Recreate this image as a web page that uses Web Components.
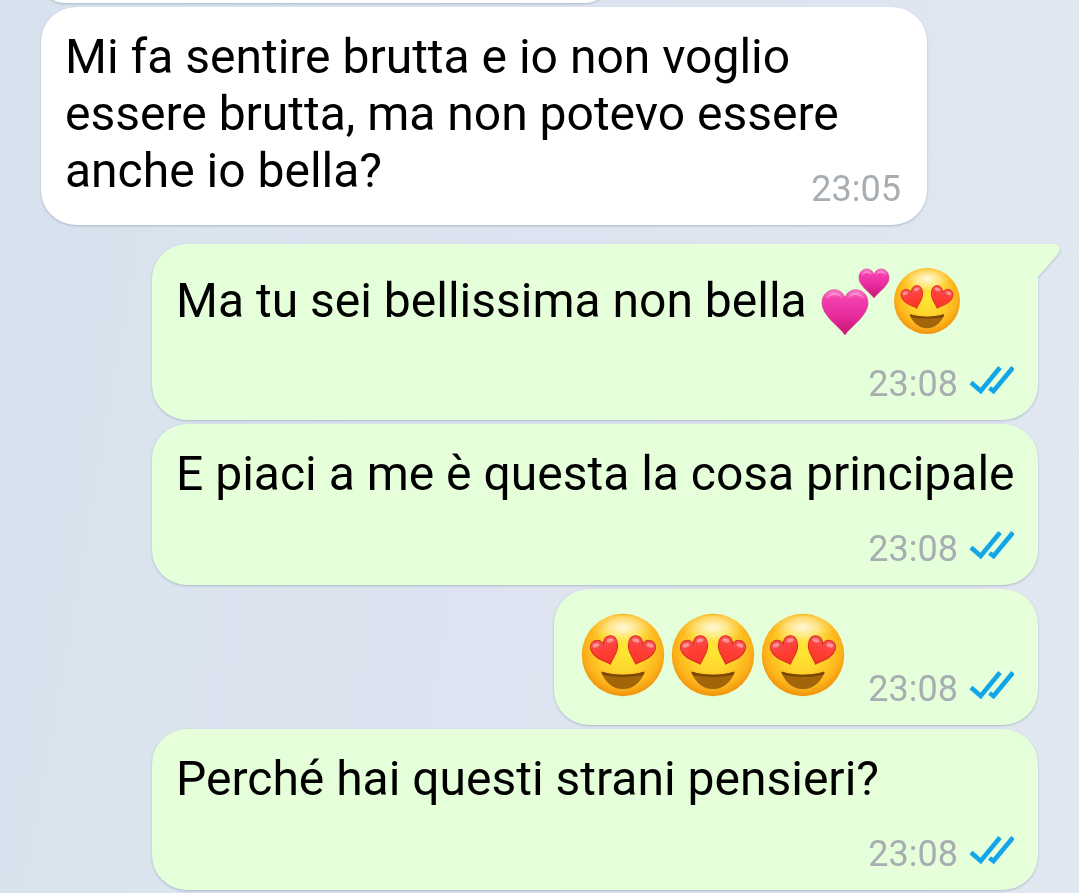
<!DOCTYPE html>
<html lang="it">
<head>
<meta charset="utf-8">
<meta name="viewport" content="width=device-width, initial-scale=1">
<title>Chat</title>
<style>
    body {
        margin: 0;
        font-family: Roboto, "Liberation Sans", sans-serif;
        color: #000;
    }
</style>
</head>
<body>

<chat-view>
    <chat-message class="previous"></chat-message>
    <chat-message class="wide" time="23:05">Mi fa sentire brutta e io non voglio essere brutta, ma non potevo essere anche io bella?</chat-message>
    <chat-message class="wide" own tail time="23:08">Ma tu sei bellissima non bella <emoji-icon name="hearts"></emoji-icon><emoji-icon name="love"></emoji-icon></chat-message>
    <chat-message class="wide" own time="23:08">E piaci a me è questa la cosa principale</chat-message>
    <chat-message own big time="23:08"><emoji-icon name="love"></emoji-icon><emoji-icon name="love"></emoji-icon><emoji-icon name="love"></emoji-icon></chat-message>
    <chat-message class="wide" own time="23:08">Perché hai questi strani pensieri?</chat-message>
</chat-view>

<script>
const HEART = 'M0 12C-3 8-11 4-11-4C-11-11-2-12 0-5C2-12 11-11 11-4C11 4 3 8 0 12Z';

const EMOJI = {
    love: {
        label: 'faccina con occhi a cuore',
        art: `
            <defs>
                <radialGradient id="face" cx="50%" cy="44%" r="57%">
                    <stop offset="0" stop-color="#ffe733"/>
                    <stop offset=".45" stop-color="#ffd62c"/>
                    <stop offset=".8" stop-color="#fdb31b"/>
                    <stop offset="1" stop-color="#ee8f0b"/>
                </radialGradient>
                <radialGradient id="shine" cx="50%" cy="35%" r="50%">
                    <stop offset="0" stop-color="#fff" stop-opacity=".85"/>
                    <stop offset=".5" stop-color="#fffbd0" stop-opacity=".5"/>
                    <stop offset="1" stop-color="#ffee70" stop-opacity="0"/>
                </radialGradient>
                <linearGradient id="eye" x1="0" y1="0" x2="0" y2="1">
                    <stop offset="0" stop-color="#f4525a"/>
                    <stop offset=".45" stop-color="#ff3e35"/>
                    <stop offset="1" stop-color="#f93624"/>
                </linearGradient>
            </defs>
            <circle cx="36" cy="36" r="33" fill="url(#face)"/>
            <ellipse cx="36" cy="18" rx="26" ry="14" fill="url(#shine)"/>
            <g transform="translate(22 32) rotate(-19)">
                <path d="${HEART}" fill="url(#eye)" stroke="#d72f20" stroke-width=".8"/>
                <ellipse cx="-6" cy="-6" rx="2.8" ry="1.6" fill="#fff" opacity=".4"/>
                <ellipse cx="6" cy="-6" rx="2.8" ry="1.6" fill="#fff" opacity=".4"/>
            </g>
            <g transform="translate(50 32) rotate(19)">
                <path d="${HEART}" fill="url(#eye)" stroke="#d72f20" stroke-width=".8"/>
                <ellipse cx="-6" cy="-6" rx="2.8" ry="1.6" fill="#fff" opacity=".4"/>
                <ellipse cx="6" cy="-6" rx="2.8" ry="1.6" fill="#fff" opacity=".4"/>
            </g>
            <path d="M19 50.5C18.6 49.6 19.2 49.3 20 49.6C30 52.4 42 52.4 52 49.6C52.8 49.3 53.4 49.6 53 50.5C46 67.5 26 67.5 19 50.5Z" fill="#a3650a"/>
            <path d="M19 50.5C18.6 49.6 19.2 49.3 20 49.6C30 52.4 42 52.4 52 49.6C52.8 49.3 53.4 49.6 53 50.5L52.2 52C41 54 31 54 19.8 52Z" fill="#7a4806"/>`
    },
    hearts: {
        label: 'due cuori',
        art: `
            <defs>
                <linearGradient id="pink" x1="0" y1="0" x2="0" y2="1">
                    <stop offset="0" stop-color="#fa7fc8"/>
                    <stop offset=".2" stop-color="#f43fae"/>
                    <stop offset=".6" stop-color="#e62a9b"/>
                    <stop offset="1" stop-color="#c5156a"/>
                </linearGradient>
            </defs>
            <path d="M26 70C21 62 3 51 3 38C3 23 22 20 26 33C30 20 49 23 49 38C49 51 31 62 26 70Z" fill="url(#pink)" stroke="#d62e91" stroke-width=".6"/>
            <path d="M55 33C52 28 40 21 40 13C40 2 53 1 55 10C57 1 70 2 70 13C70 21 58 28 55 33Z" fill="url(#pink)" stroke="#d62e91" stroke-width=".6"/>
            <path d="M7 34C9 27 20 25 23 33C18 29 12 29 7 34ZM29 33C32 25 43 27 45 34C40 29 34 29 29 33Z" fill="#fff" opacity=".3"/>
            <path d="M43 11C44 5 51 4 53 10C49 7 46 7 43 11ZM57 10C59 4 66 5 67 11C64 7 61 7 57 10Z" fill="#fff" opacity=".3"/>`
    }
};

class EmojiIcon extends HTMLElement {

    constructor() {
        super();
        this.root = this.attachShadow({ mode: 'open' });
    }

    get name() {
        return this.getAttribute('name');
    }

    connectedCallback() {
        const emoji = EMOJI[this.name];
        this.root.innerHTML = `
            <style>
                :host {
                    display: inline-block;
                    width: var(--emoji-size, 72px);
                    height: var(--emoji-size, 72px);
                    vertical-align: -20px;
                }
                svg {
                    display: block;
                    width: 100%;
                    height: 100%;
                }
            </style>
            <svg viewBox="0 0 72 72" role="img" aria-label="${emoji.label}">${emoji.art}</svg>
        `;
    }

}

class ReadTicks extends HTMLElement {

    constructor() {
        super();
        this.root = this.attachShadow({ mode: 'open' });
    }

    connectedCallback() {
        this.root.innerHTML = `
            <style>
                :host {
                    display: block;
                    width: 46px;
                    height: 32px;
                }
                svg {
                    display: block;
                    fill: none;
                    stroke: #12a5e8;
                    stroke-width: 4.6;
                }
            </style>
            <svg width="46" height="32" viewBox="0 0 46 32" role="img" aria-label="letto">
                <path d="M3 19.5L12.7 28L32 4.5M21.5 25L25.5 28L45 4.5"/>
            </svg>
        `;
    }

}

class ChatMessage extends HTMLElement {

    constructor() {
        super();
        this.root = this.attachShadow({ mode: 'open' });
    }

    get time() {
        return this.getAttribute('time');
    }

    get own() {
        return this.hasAttribute('own');
    }

    get tail() {
        return this.hasAttribute('tail');
    }

    connectedCallback() {
        this.render();
    }

    render() {
        this.root.innerHTML = `
            <style>
                :host {
                    --bubble: #fff;
                    display: grid;
                    box-sizing: border-box;
                    position: relative;
                    flex: none;
                    align-self: flex-start;
                    padding: 21px 20px 15px 24px;
                    border-radius: 35px;
                    background: var(--bubble);
                    filter: drop-shadow(0 1px 1px rgba(110, 130, 150, .45));
                }
                :host([own]) {
                    --bubble: #e5ffdb;
                    align-self: flex-end;
                }
                :host([tail]) {
                    margin-top: 15px;
                    border-top-right-radius: 0;
                }
                :host([big]) {
                    --emoji-size: 90px;
                    grid-template-columns: auto auto;
                    column-gap: 20px;
                }
                .text {
                    font-size: 48px;
                    line-height: 57px;
                    padding-bottom: 11px;
                }
                /* the time shares the last row with the text of a received message */
                .text, .meta {
                    grid-area: 1 / 1;
                }
                :host([own]) .text {
                    padding-bottom: 26px;
                }
                :host([own]) .meta {
                    grid-area: 2 / 1;
                    padding-right: 4px;
                }
                :host([big]) .text {
                    display: flex;
                    padding-bottom: 10px;
                }
                :host([big]) .meta {
                    grid-area: 1 / 2;
                }
                .meta {
                    display: flex;
                    gap: 10px;
                    align-self: end;
                    justify-self: end;
                    padding-right: 6px;
                    font-size: 36px;
                    line-height: 42px;
                    color: #a8adb2;
                }
                .tail {
                    position: absolute;
                    top: 0;
                    left: 100%;
                    margin-left: -1px;
                    fill: var(--bubble);
                }
            </style>
            <div class="text"><slot></slot></div>
            ${this.time ? `<div class="meta"><time>${this.time}</time>${this.own ? '<read-ticks></read-ticks>' : ''}</div>` : ''}
            ${this.tail ? '<svg class="tail" width="24" height="36" viewBox="0 0 24 36" aria-hidden="true"><path d="M0 0H16C22 0 25 5 21 10L1 33V36H0Z"/></svg>' : ''}
        `;
    }

}

class ChatView extends HTMLElement {

    constructor() {
        super();
        this.root = this.attachShadow({ mode: 'open' });
    }

    connectedCallback() {
        this.root.innerHTML = `
            <style>
                :host {
                    display: flex;
                    flex-direction: column;
                    justify-content: flex-end;
                    gap: 4px;
                    box-sizing: border-box;
                    height: 100vh;
                    padding: 0 41px 3px;
                    overflow: hidden;
                    background: linear-gradient(100deg, #d7e1ed 0%, #dae4ef 22%, #dde3f0 45%, #dfe6f0 75%, #e2e8f2 100%);
                }
                ::slotted(.wide) {
                    width: calc(100% - 111px);
                }
                ::slotted(.previous) {
                    width: 57%;
                }
            </style>
            <slot></slot>
        `;
    }

}

customElements.define('emoji-icon', EmojiIcon);
customElements.define('read-ticks', ReadTicks);
customElements.define('chat-message', ChatMessage);
customElements.define('chat-view', ChatView);
</script>
</body>
</html>
